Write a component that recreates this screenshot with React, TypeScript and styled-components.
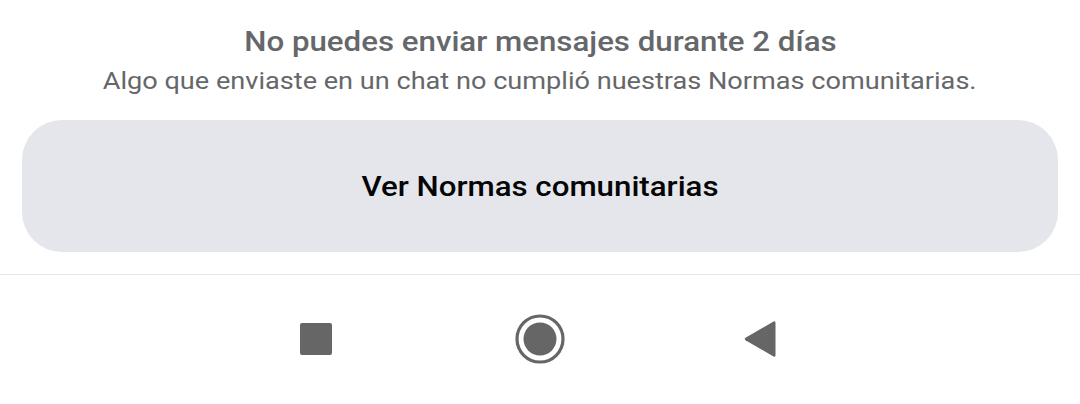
import React from "react";
import styled, { createGlobalStyle } from "styled-components";

const GlobalStyle = createGlobalStyle`
  html, body {
    margin: 0;
    padding: 0;
    background: #ffffff;
    font-family: Roboto, "Liberation Sans", sans-serif;
  }
`;

const Screen = styled.div`
  width: 1080px;
  height: 404px;
  display: flex;
  flex-direction: column;
  background: #ffffff;
  overflow: hidden;
`;

const Notice = styled.div`
  display: flex;
  flex-direction: column;
  align-items: center;
  gap: 5px;
  padding-top: 24px;
`;

// the screenshot text is slightly stretched sideways
const Title = styled.div`
  font-size: 28px;
  font-weight: 500;
  line-height: 36px;
  color: #65676b;
  white-space: nowrap;
  transform: scaleX(1.116);
`;

const Subtitle = styled.div`
  font-size: 24px;
  line-height: 32px;
  color: #65676b;
  white-space: nowrap;
  transform: scaleX(1.13);
`;

const ButtonWrap = styled.div`
  padding: 23px 22px 22px;
`;

const RulesButton = styled.button`
  width: 100%;
  height: 132px;
  border: none;
  border-radius: 40px;
  background: #e4e6eb;
  color: #050505;
  font-family: Roboto, "Liberation Sans", sans-serif;
  font-size: 28px;
  font-weight: 500;
  cursor: pointer;
  padding: 0;
`;

const ButtonLabel = styled.span`
  display: inline-block;
  transform: scaleX(1.116);
`;

const Divider = styled.hr`
  margin: 0;
  border: none;
  height: 1px;
  background: #e6e7ea;
`;

const NavBar = styled.nav`
  flex: 1;
  display: flex;
  justify-content: center;
  align-items: center;
  gap: 174px;
  padding-bottom: 2px;
`;

const NavButton = styled.div`
  width: 50px;
  height: 50px;
  display: flex;
  align-items: center;
  justify-content: center;
`;

const ICON = "#666666";

export default function App() {
  return (
    <Screen>
      <GlobalStyle />
      <Notice>
        <Title>No puedes enviar mensajes durante 2 días</Title>
        <Subtitle>
          Algo que enviaste en un chat no cumplió nuestras Normas comunitarias.
        </Subtitle>
      </Notice>
      <ButtonWrap>
        <RulesButton>
          <ButtonLabel>Ver Normas comunitarias</ButtonLabel>
        </RulesButton>
      </ButtonWrap>
      <Divider />
      <NavBar>
        <NavButton>
          <svg width="32" height="32" viewBox="0 0 32 32">
            <rect x="0" y="0" width="32" height="32" rx="2" fill={ICON} />
          </svg>
        </NavButton>
        <NavButton>
          <svg width="50" height="50" viewBox="0 0 50 50">
            <circle cx="25" cy="25" r="23" fill="none" stroke={ICON} strokeWidth="3.2" />
            <circle cx="25" cy="25" r="16.5" fill={ICON} />
          </svg>
        </NavButton>
        <NavButton>
          <svg width="40" height="38" viewBox="0 0 40 38">
            <path
              d="M29.5 1.5 Q31.5 0.6 31.5 3 L31.5 35 Q31.5 37.4 29.5 36.5 L1.5 20.2 Q0 19 1.5 17.8 Z"
              fill={ICON}
            />
          </svg>
        </NavButton>
      </NavBar>
    </Screen>
  );
}
